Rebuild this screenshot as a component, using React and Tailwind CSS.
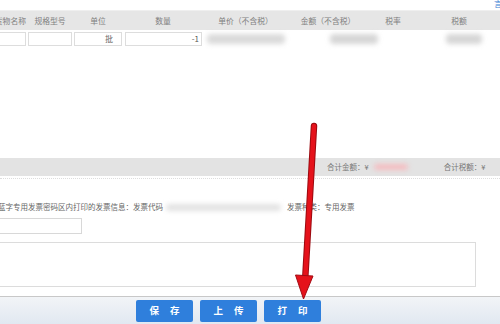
import React from "react";

const cols = [
    { w: "w-[27px]", label: "货物名称", align: "justify-end pr-[1px]" },
    { w: "w-[46px]", label: "规格型号", align: "justify-center" },
    { w: "w-[50px]", label: "单位", align: "justify-center" },
    { w: "w-[80px]", label: "数量", align: "justify-center" },
    { w: "w-[85px]", label: "单价（不含税）", align: "justify-center" },
    { w: "w-[80px]", label: "金额（不含税）", align: "justify-center" },
    { w: "w-[50px]", label: "税率", align: "justify-center" },
    { w: "w-[82px]", label: "税额", align: "justify-center" },
];

function Blur({ className }) {
    return <div className={`blur-[2.5px] rounded-sm ${className}`} />;
}

export default function App() {
    return (
        <div className="relative w-[500px] h-[324px] overflow-hidden bg-white font-['Noto_Sans_CJK_SC','Noto_Sans',sans-serif] text-[7.5px] text-[#666]">
            {/* top link */}
            <div className="h-[10px] flex justify-end overflow-hidden">
                <span className="text-[#3b7fd4] text-[8px] leading-[8px] -mr-[2px]">言</span>
            </div>

            {/* table header */}
            <div className="h-[20px] flex items-center bg-[#e6e6e6] border-t border-[#efefef] text-[#808080] text-[7.8px]">
                {cols.map((c) => (
                    <div key={c.label} className={`${c.w} shrink-0 flex ${c.align} overflow-hidden whitespace-nowrap`}>
                        {c.label}
                    </div>
                ))}
            </div>

            {/* data row */}
            <div className="h-[14px] mt-[2px] flex items-stretch text-[8px]">
                <div className="w-[26px] border border-[#ddd] border-l-0" />
                <div className="w-[44px] ml-[2px] border border-[#ddd]" />
                <div className="w-[48px] ml-[2px] border border-[#ddd] flex items-center justify-end pr-[8px] leading-none text-[#666]">
                    <span className="text-[#666]">批</span>
                </div>
                <div className="w-[77px] ml-[3px] border border-[#ddd] flex items-center justify-end pr-[2px] leading-none text-[#555]">-1</div>
                <Blur className="w-[78px] ml-[5px] bg-[#dadada] my-[2px]" />
                <Blur className="w-[48px] ml-[45px] bg-[#d6d6d6] my-[2px]" />
                <Blur className="w-[36px] ml-[68px] bg-[#d6d6d6] my-[2px]" />
            </div>

            {/* totals band */}
            <div className="mt-[112px] h-[18px] flex items-center bg-[#e3e3e3] whitespace-nowrap text-[#777]">
                <span className="ml-[327px]">合计金额：¥</span>
                <Blur className="w-[34px] h-[6px] ml-[5px] bg-[#f5bcc0]" />
                <span className="ml-[36px]">合计税额：¥</span>
            </div>
            <div className="mt-[2px] border-t border-dotted border-[#ddd]" />

            {/* invoice info line */}
            <div className="mt-[22px] h-[12px] flex items-center whitespace-nowrap -ml-[2px]">
                <span>蓝字专用发票密码区内打印的发票信息：发票代码</span>
                <Blur className="w-[115px] h-[7px] ml-[3px] bg-[#e2e2e2]" />
                <span className="ml-[6px]">发票种类：专用发票</span>
            </div>

            <div className="mt-[5px] w-[82px] h-[16px] border border-[#d8d8d8] border-l-0" />

            <div className="mt-[8px] w-[476px] h-[45px] border border-[#dcdcdc] border-l-0" />

            {/* bottom toolbar */}
            <div className="mt-[9px] h-[28px] border-t border-[#c8c8c8] bg-gradient-to-b from-[#f2f4f7] to-[#e1e8f1] flex items-start pt-[3px] pl-[136px] gap-[7px]">
                {["保存", "上传", "打印"].map((t) => (
                    <button
                        key={t}
                        className="w-[57px] h-[22px] bg-[#2f7fdc] rounded-[2px] text-white font-bold text-[9.5px] flex items-center justify-center gap-[11px] leading-none"
                    >
                        <span>{t[0]}</span>
                        <span>{t[1]}</span>
                    </button>
                ))}
            </div>

            {/* red arrow overlay */}
            <svg className="absolute inset-0 pointer-events-none" width="500" height="324" viewBox="0 0 500 324">
                <line x1="314" y1="126" x2="305" y2="282" stroke="#9b0a10" strokeWidth="6.5" strokeLinecap="round" />
                <line x1="314" y1="126" x2="305" y2="282" stroke="#e5121b" strokeWidth="4.5" strokeLinecap="round" />
                <polygon points="295.5,275 313,276 303.5,299" fill="#e5121b" stroke="#a30a12" strokeWidth="1" strokeLinejoin="round" />
            </svg>
        </div>
    );
}
